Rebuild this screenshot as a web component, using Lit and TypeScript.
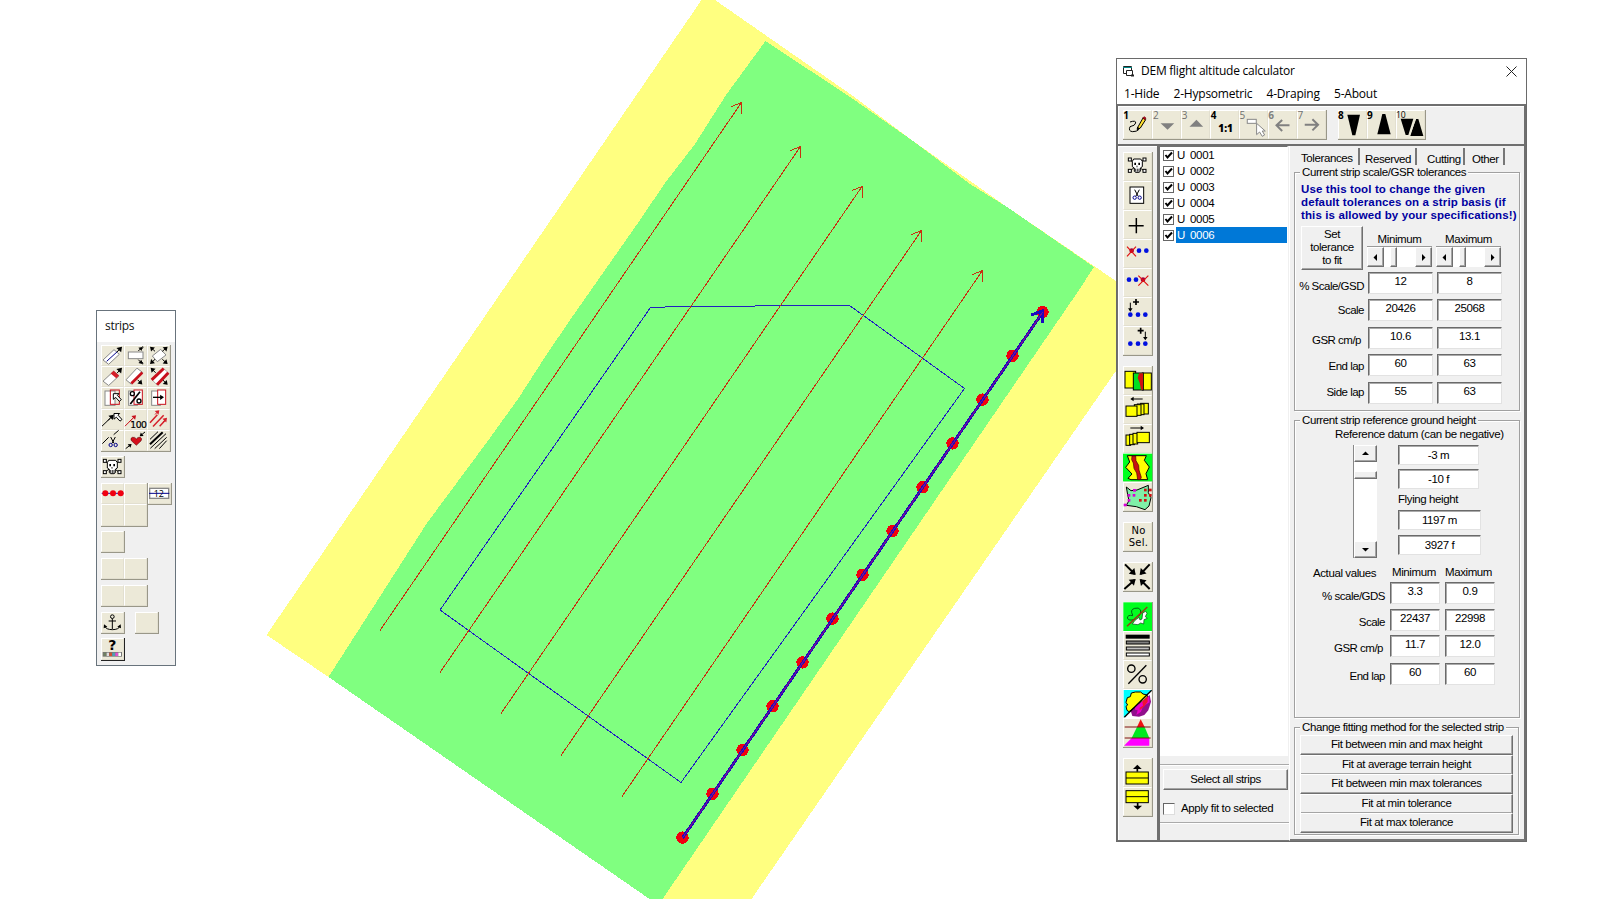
import { LitElement, html, svg, css, nothing } from "lit";
import { customElement } from "lit/decorators.js";

/* Icon artwork is drawn on a 3-units-per-pixel canvas. */
const icon = (x: number, y: number, w: number, h: number, art: unknown) =>
  html`<svg viewBox="${x} ${y} ${w} ${h}" width=${w / 3} height=${h / 3}>${art}</svg>`;

/* Shaft with a solid head at the end point. */
const arrow = (x1: number, y1: number, x2: number, y2: number, color = "#000", head = 12, w = 3) => {
  const a = Math.atan2(y2 - y1, x2 - x1);
  const p = (d: number) => `${x2 - head * Math.cos(a + d)},${y2 - head * Math.sin(a + d)}`;
  return svg`<line x1=${x1} y1=${y1} x2=${x2 - 4 * Math.cos(a)} y2=${y2 - 4 * Math.sin(a)} stroke=${color} stroke-width=${w} />
    <polygon points="${x2},${y2} ${p(0.6)} ${p(-0.6)}" fill=${color} />`;
};

const skull = (x: number, y: number) => svg`<g transform="translate(${x} ${y})" fill="#fff" stroke="#000" stroke-width="3">
  <path d="M8 8L48 40M48 8L8 40" />
  <rect x="2" y="2" width="9" height="9" /><rect x="46" y="2" width="9" height="9" />
  <rect x="2" y="36" width="9" height="9" /><rect x="46" y="36" width="9" height="9" />
  <path d="M18 5H39L44 12V28L38 32V42L34 45H24L20 42V32L14 28V12Z" />
  <path d="M20 16h5v7h-5zM32 16h5v7h-5z" fill="#000" stroke="none" />
  <path d="M28 25v5M24 34v9M29 34v9M34 34v9" stroke-width="2.5" />
</g>`;

const cursor = (x: number, y: number) =>
  svg`<path d="M${x} ${y}h17l-5 5l12 13l-6 5l-11 -12l-7 6z" fill="#fff" stroke="#000" stroke-width="3" />`;

const scissors = (x: number, y: number) => svg`<g transform="translate(${x} ${y})" fill="none" stroke-width="3">
  <path d="M5 0L15 19M19 0L9 19" stroke="#000" /><circle cx="5" cy="24" r="5" stroke="#00008b" /><circle cx="20" cy="24" r="5" stroke="#00008b" />
</g>`;

const stripIcons = [
  svg`<polygon points="40,166 73,135 89,149 57,179" fill="#fff" stroke="#888" stroke-width="3" /><path d="M51 170L84 140" stroke="#00008b" stroke-width="3" />${arrow(82, 142, 97, 126, "#000", 17)}`,
  svg`<rect x="116" y="142" width="44" height="20" fill="#fff" stroke="#888" stroke-width="3" />${arrow(146, 139, 158, 127)}${arrow(146, 165, 158, 178)}<path d="M153 136q10 -8 6 -11M153 168q10 8 6 11" stroke="#000" stroke-width="3" fill="none" />`,
  svg`<polygon points="188,154 213,134 229,151 203,171" fill="#fff" stroke="#888" stroke-width="3" />${arrow(218, 140, 234, 126, "#000", 15)}${arrow(196, 140, 181, 126, "#000", 15)}${arrow(196, 164, 181, 178, "#000", 15)}${arrow(218, 164, 234, 178, "#000", 15)}`,
  svg`<polygon points="40,230 72,200 88,214 57,243" fill="#fff" stroke="#888" stroke-width="3" /><polygon points="63,207 72,199 88,213 80,221" fill="#d5202a" />${arrow(82, 206, 97, 190, "#000", 17)}`,
  svg`<polygon points="109,226 142,191 159,204 125,239" fill="#fff" stroke="#888" stroke-width="3" /><path d="M125 237L158 204" stroke="#c8101c" stroke-width="8" />${arrow(144, 226, 158, 240, "#000", 15)}`,
  svg`<polygon points="187,226 222,192 236,205 201,240" fill="#fff" stroke="#888" stroke-width="2" /><path d="M186 226L222 192M202 241L236 205" stroke="#c8101c" stroke-width="9" />${arrow(198, 205, 183, 190, "#000", 15)}${arrow(220, 227, 234, 241, "#000", 15)}`,
  svg`<rect x="46" y="260" width="30" height="43" fill="#fff" stroke="#888" stroke-width="3" /><rect x="62" y="257" width="27" height="43" fill="none" stroke="#c8101c" stroke-width="3" />${cursor(71, 268)}`,
  svg`<rect x="117" y="260" width="26" height="43" fill="#fff" stroke="#888" stroke-width="3" /><rect x="133" y="257" width="25" height="43" fill="#fff" stroke="#c8101c" stroke-width="3" /><path d="M122 299L151 262" stroke="#000" stroke-width="5" /><circle cx="128" cy="268" r="6" fill="#fff" stroke="#000" stroke-width="4" /><circle cx="148" cy="290" r="6" fill="#fff" stroke="#000" stroke-width="4" />`,
  svg`<rect x="186" y="260" width="26" height="43" fill="#fff" stroke="#888" stroke-width="3" /><rect x="204" y="257" width="24" height="43" fill="#fff" stroke="#c8101c" stroke-width="3" />${arrow(190, 279, 223, 279, "#000", 14, 4)}`,
  svg`<path d="M37 363L62 339" stroke="#000" stroke-width="3" />${arrow(55, 346, 72, 329, "#000", 16)}${cursor(73, 325)}`,
  svg`<path d="M106 363L126 343" stroke="#c8101c" stroke-width="3" />${arrow(119, 350, 139, 330, "#c8101c", 14)}<text x="122" y="368" font-family="DejaVu Sans" font-size="28" textLength="50" stroke="#000" stroke-width=".6">100</text>`,
  svg`<path d="M181 353L203 329M190 364L222 330M210 363L226 346" stroke="#d5202a" stroke-width="4.5" />${arrow(196, 328, 209, 315, "#d5202a", 14)}${arrow(220, 351, 232, 338, "#d5202a", 14)}`,
  svg`<path d="M38 416L57 397M72 389L87 376" stroke="#000" stroke-width="3" />${scissors(58, 396)}`,
  svg`<path d="M140 421L125 407q-4 -7 3 -10q8 -2 12 5q4 -7 12 -5q7 4 2 11z" fill="#d5101c" stroke="#400" stroke-width="1.5" />${arrow(166, 381, 150, 394)}${arrow(108, 431, 126, 417)}`,
  svg`<path d="M181 403L205 380M209 431L231 407" stroke="#000" stroke-width="3" /><path d="M181 418L219 382" stroke="#000" stroke-width="6" /><path d="M182 430L229 386M195 431L231 397" stroke="#000" stroke-width="3" />`,
];

const sideTop = [
  skull(54, 53),
  svg`<rect x="61" y="142" width="41" height="49" fill="#fff" stroke="#000" stroke-width="3" />${scissors(70, 150)}`,
  svg`<path d="M57 258H102M80 235V281" stroke="#000" stroke-width="4.5" />`,
  svg`<circle cx="66" cy="333" r="7" fill="#a00040" /><circle cx="88" cy="333" r="7" fill="#0010e0" /><circle cx="110" cy="333" r="7" fill="#0010e0" /><path d="M52 321L79 350M79 321L52 350" stroke="#e01010" stroke-width="3.5" />`,
  svg`<circle cx="58" cy="420" r="7" fill="#0010e0" /><circle cx="79" cy="420" r="7" fill="#0010e0" /><circle cx="100" cy="420" r="7" fill="#a00040" /><path d="M86 408L116 438M116 408L86 438" stroke="#e01010" stroke-width="3.5" />`,
  svg`<circle cx="62" cy="525" r="7" fill="#0010e0" /><circle cx="85" cy="525" r="7" fill="#0010e0" /><circle cx="107" cy="525" r="7" fill="#0010e0" />${arrow(62, 489, 62, 516)}<path d="M70 487H88M79 478V496" stroke="#000" stroke-width="5" />`,
  svg`<circle cx="62" cy="612" r="7" fill="#0010e0" /><circle cx="85" cy="612" r="7" fill="#0010e0" /><circle cx="107" cy="612" r="7" fill="#0010e0" />${arrow(107, 576, 107, 602)}<path d="M84 573H102M93 564V582" stroke="#000" stroke-width="5" />`,
];

const sideMid = [
  svg`<rect x="46" y="50" width="32" height="50" fill="#ff0" stroke="#000" stroke-width="3" /><rect x="98" y="55" width="27" height="51" fill="#ff0" stroke="#000" stroke-width="3" /><rect x="71" y="55" width="30" height="51" fill="#00e020" stroke="#000" stroke-width="3" /><path d="M88 56l-4 14l6 14l4 21h6V56z" fill="#d01010" />`,
  svg`${arrow(99, 133, 62, 133)}<g fill="#ff0" stroke="#000" stroke-width="3"><rect x="93" y="146" width="23" height="32" /><rect x="83" y="148" width="20" height="32" /><rect x="74" y="150" width="20" height="32" /><rect x="49" y="154" width="33" height="31" /></g>`,
  svg`${arrow(62, 220, 103, 220)}<g fill="#ff0" stroke="#000" stroke-width="3"><rect x="49" y="241" width="14" height="31" /><rect x="60" y="239" width="14" height="31" /><rect x="70" y="236" width="14" height="32" /><rect x="82" y="233" width="37" height="31" /></g>`,
  svg`<rect x="40" y="297" width="88" height="83" fill="#00ff20" /><path d="M53 303H110L104 317L119 337L109 357L114 375H64L55 371L67 358L48 338L60 322Z" fill="#ff0" stroke="#000" stroke-width="3" /><path d="M67 304h11l1 14l8 14l1 14l7 22l-3 7h-8l-3 -20l-8 -14l-2 -16l-5 -10z" fill="#c81010" stroke="#400" stroke-width="2" />`,
  svg`<path d="M50 397l14 11l18 -2l34 -14v22l8 15l-6 25l-12 11l-26 -9l-30 -4l8 -14l-4 -18z" fill="#80f0a8" stroke="#000" stroke-width="3" /><g fill="#d800d8"><rect x="70" y="403" width="9" height="8" /><rect x="54" y="418" width="8" height="8" /><rect x="69" y="418" width="8" height="8" /><rect x="54" y="433" width="8" height="8" /><rect x="42" y="447" width="9" height="8" /></g><g fill="#d01010"><rect x="103" y="402" width="8" height="8" /><rect x="118" y="402" width="8" height="8" /><rect x="103" y="418" width="8" height="8" /><rect x="118" y="418" width="8" height="8" /><rect x="88" y="433" width="8" height="8" /><rect x="103" y="433" width="8" height="8" /></g>`,
];

const inward = svg`${arrow(46, 628, 78, 660, "#000", 21, 6)}${arrow(120, 628, 90, 660, "#000", 21, 6)}${arrow(44, 702, 78, 672, "#000", 21, 6)}${arrow(120, 702, 90, 672, "#000", 21, 6)}`;

const sideLow = [
  svg`<rect x="41" y="38" width="86" height="86" fill="#00ff20" /><path d="M69 76q-9 -16 6 -20q12 -4 18 5q2 12 -6 19M70 78q-16 -4 -17 7q4 10 22 4" fill="none" stroke="#004010" stroke-width="2.5" /><path d="M68 103l8 -11l12 -9l3 8l6 -3l2 -18l9 -5l4 6l-5 10l6 5l-10 4l-1 13l-9 -3l-8 5z" fill="#fff" stroke="#004010" stroke-width="2" /><path d="M52 110L113 52" stroke="#a03018" stroke-width="4" />`,
  svg`<rect x="48" y="135" width="72" height="12" fill="#000" /><g stroke="#000" stroke-width="3"><rect x="50" y="154" width="69" height="9" fill="#808080" /><rect x="50" y="172" width="69" height="9" fill="#c0c0c0" /><rect x="50" y="190" width="69" height="9" fill="#fff" /></g>`,
  svg`<circle cx="65" cy="237" r="11" fill="none" stroke="#000" stroke-width="4" /><circle cx="99" cy="269" r="11" fill="none" stroke="#000" stroke-width="4" /><path d="M56 282L110 227" stroke="#000" stroke-width="4" />`,
  svg`<rect x="42" y="301" width="84" height="84" fill="#fff" /><path d="M42 301H126L42 384z" fill="#0ff" /><path d="M58 366l-6 -4l-3 -12l5 -4l-5 -8l4 -14l9 -3l3 -11l12 -3h16l7 6l12 3l2 7z" fill="#ff0" stroke="#000" stroke-width="3" /><path d="M63 363L120 316l4 20l-8 26l-12 14l-16 5l-20 -2z" fill="#90108c" /><path d="M76 352L118 320l2 18l-20 12l-6 16l-14 10l4 -14l-8 -2z" fill="#e800c8" /><path d="M98 336L114 320v16l-10 14l-14 12v-8l10 -6z" fill="#f01030" /><path d="M44 383L126 302" stroke="#000" stroke-width="4" />`,
  svg`<path d="M93 389L105 412H82z" fill="#f01010" /><path d="M82 412h23l14 33H66z" fill="#00e820" /><path d="M66 445h53v23H43z" fill="#f0f" /><path d="M45 412H123M45 445H123" stroke="#801010" stroke-width="3" />`,
];
const fitUp = svg`<g fill="#ff0" stroke="#000" stroke-width="3"><rect x="49" y="548" width="67" height="36" /><path d="M49 566H116" /></g><path d="M83 547V532" stroke="#000" stroke-width="5" /><path d="M83 526l13 13H70z" />`;
const fitDown = svg`<g fill="#ff0" stroke="#000" stroke-width="3"><rect x="49" y="604" width="67" height="36" /><path d="M49 622H116" /></g><path d="M84 641V655" stroke="#000" stroke-width="5" /><path d="M84 661l13 -12H71z" />`;

const num = (x: number, s: string, c: string, w = 700) =>
  svg`<text x=${x} y="194" font-family="Open Sans" font-weight=${w} font-size="30" letter-spacing="-1" fill=${c}>${s}</text>`;
const tools = [
  svg`${num(40, "1", "#000")}<path d="M60 202q18 -6 17 3q-1 8 -17 11q-6 14 8 15q12 0 18 -6" fill="none" stroke="#000" stroke-width="3" /><path d="M82 220L99 190L107 195L91 220L82 226z" fill="#ffe030" stroke="#000" stroke-width="3" /><path d="M98 190l4 -4l6 4l-3 5z" fill="#c00020" stroke="#600" stroke-width="2" /><path d="M82 216l8 5l-9 6z" />`,
  svg`${num(129, "2", "#707070", 400)}<path d="M152 206h41l-20 19z" fill="#808080" />`,
  svg`${num(216, "3", "#707070", 400)}<path d="M239 216h41l-20 -21z" fill="#808080" />`,
  svg`${num(303, "4", "#000")}<text x="326" y="231" font-family="Open Sans" font-weight="800" font-size="30" textLength="43">1:1</text>`,
  svg`${num(390, "5", "#707070", 400)}<rect x="413" y="194" width="27" height="12" fill="#fff" stroke="#888" stroke-width="3" /><path d="M441 206v34l9 -8l8 13l7 -4l-7 -12h9z" fill="#fff" stroke="#888" stroke-width="3" />`,
  svg`${num(476, "6", "#808080")}<path d="M502 212H540M518 196L501 212L518 229" stroke="#808080" stroke-width="6" fill="none" />`,
  svg`${num(564, "7", "#707070", 400)}<path d="M586 210H625M609 194L626 210L609 227" stroke="#808080" stroke-width="6" fill="none" />`,
];
const tools2 = [
  svg`${num(683, "8", "#000")}<path d="M711 180h38l-14 62h-9z" />`,
  svg`${num(770, "9", "#000")}<path d="M801 239l15 -61h9l16 61z" />`,
  svg`<path d="M871 192h38l-15 49h-8zM900 244l16 -51h8l15 51z" /><path d="M896 246L918 188" stroke="#ece9d8" stroke-width="3" /><text x="857" y="190" font-family="Open Sans" font-size="26">10</text>`,
];

@customElement("strip-map")
export class StripMap extends LitElement {
  static styles = css`
    :host { display: block; height: 899px; }
    svg { display: block; }
  `;
  render() {
    const lines = [
      [380, 630.5, 741.5, 102.5], [440, 672.5, 800.5, 146.5], [501, 713.5, 862, 186.5],
      [561, 755.5, 921.5, 230.5], [622, 796.5, 982.5, 270.5],
    ];
    const dots = Array.from({ length: 13 }, (_, i) => [682.5 + i * 30, 837.6 - i * 43.8]);
    return html`<svg width="1601" height="899" shape-rendering="crispEdges" fill="none">
      <polygon fill="#ffff80" points="266.5,635 701.5,0 715,0 853,96 913,141 973,183 1007,207 1116,281 1150,305 1158,310 751.5,899 650,899 328.5,677" />
      <polygon fill="#80ff80" points="765.5,41 853,99 913,141 970,184 1007,207 1094,267 1079,290 662.5,899 649.5,899 328.5,677 427,523 487,442 518,399 545,357 570,320 640,220 665,183 695,144 726,95" />
      <polygon stroke="#2020c0" points="650.5,307.5 679.5,306.5 831.5,305.5 849.5,305.5 964.5,388.5 681,782.5 440,610" />
      ${lines.map(([a, b, c, d]) => svg`<path stroke="#c83010" d="M${a} ${b}L${c} ${d}M${c - 10} ${d + 4}L${c} ${d}V${d + 11}" />`)}
      ${dots.map(([x, y]) => svg`<circle cx=${x} cy=${y} r="6.2" fill="#f00010" />`)}
      <path stroke="#1c08c0" stroke-width="3" d="M682.5 838L1042.5 312.5M1031 315L1042.5 311V323" />
      <path stroke="#7c108c" d="M682.5 838L1042.5 312.5" />
    </svg>`;
  }
}

@customElement("tool-button")
export class ToolButton extends LitElement {
  static styles = css`
    :host { display: block; box-sizing: border-box; background: #ece9d8; border: 1px solid; border-color: #fff #e2dfd0 #e2dfd0 #fff; }
    ::slotted(svg) { display: block; margin: -1px; overflow: visible; }
  `;
  render() { return html`<slot></slot>`; }
}

@customElement("strips-window")
export class StripsWindow extends LitElement {
  static styles = css`
    :host { display: block; box-sizing: border-box; width: 80px; height: 356px; border: 1px solid #68737c; background: #f0f0f0; }
    .title { height: 31px; background: #fff; padding-left: 8px; font: 12px/30px "Open Sans", sans-serif; letter-spacing: -0.3px; box-sizing: border-box; color: #111; }
    .grid { display: grid; margin-left: 4px; grid-auto-rows: 21.2px; width: max-content; border-right: 1px solid #999788; border-bottom: 1px solid #999788; }
    .c3 { grid-template-columns: repeat(3, 23px); margin-top: 3px; }
    .c2 { grid-template-columns: repeat(2, 23px); }
    .c1 { grid-template-columns: 23px; }
    .g1 { margin-top: 4.6px; }
    .c3 + .g1 { margin-top: 4px; }
    .row { display: flex; align-items: flex-start; margin-top: 5px; }
    .row .c1 + .c1 { margin-left: 10px; }
    .row .c2 + .c1 { margin-left: 0; }
    .help { border-color: #222; margin-top: 4.4px; }
    svg { overflow: visible; }
  `;
  render() {
    const b = (art?: unknown) => html`<tool-button>${art ?? nothing}</tool-button>`;
    return html`
      <div class="title">strips</div>
      <div class="grid c3">${stripIcons.map((a, i) => b(icon(34 + (i % 3) * 69, 121 + Math.floor(i / 3) * 63.5, 69, 63.5, a)))}</div>
      <div class="grid c1 g1">${b(icon(34, 453, 69, 64, skull(39, 461)))}</div>
      <div class="row">
        <div class="grid c2">
          ${b(icon(34, 9, 69, 64, svg`<path d="M36 40H101" stroke="#1c08c0" stroke-width="3" /><circle cx="47" cy="40" r="9" fill="#f00010" /><circle cx="70" cy="40" r="9" fill="#f00010" /><circle cx="93" cy="40" r="9" fill="#f00010" />`))}
          ${b()}${b()}${b()}
        </div>
        <div class="grid c1">${b(icon(173, 9, 69, 64, svg`<rect x="178" y="25" width="57" height="30" fill="#fff" stroke="#888" stroke-width="4" /><text x="190" y="50" font-family="Open Sans" font-size="27" textLength="31">12</text><path d="M176 40H237" stroke="#00008b" stroke-width="3" />`))}</div>
      </div>
      <div class="grid c1 g1">${b()}</div>
      <div class="grid c2 g1">${b()}${b()}</div>
      <div class="grid c2 g1">${b()}${b()}</div>
      <div class="row">
        <div class="grid c1">${b(icon(34, 397, 69, 64, svg`<g fill="none" stroke="#000" stroke-width="3"><circle cx="68" cy="411" r="5.5" /><path d="M68 417V448M57 424H79M45 439q4 11 23 11q19 0 23 -11" /><path d="M42 446l1 -12l10 7zM94 446l-1 -12l-10 7z" fill="#000" stroke="none" /></g>`))}</div>
        <div class="grid c1">${b()}</div>
      </div>
      <div class="grid c1 g1 help">${b(icon(34, 478, 69, 64, svg`<text x="56" y="514" font-family="DejaVu Sans" font-weight="700" font-size="42">?</text><rect x="39" y="520" width="58" height="14" fill="#777" /><rect x="42" y="522" width="8" height="10" fill="#708060" /><rect x="51" y="522" width="7" height="10" fill="#ddd" /><rect x="59" y="522" width="8" height="10" fill="#d05030" /><rect x="68" y="522" width="8" height="10" fill="#50a0b0" /><rect x="77" y="522" width="8" height="10" fill="#e050d0" /><rect x="86" y="522" width="8" height="10" fill="#fff" />`))}</div>
    `;
  }
}

interface FieldRow { label: string; pad: number; min: string; max: string; gap: number; end?: number; }

@customElement("dem-window")
export class DemWindow extends LitElement {
  static styles = css`
    :host { display: flex; flex-direction: column; box-sizing: border-box; width: 411px; height: 784px; border: 1px solid #6a6a6a; background: #f0f0f0; font: 11.5px/13px "Liberation Sans", Arial, sans-serif; letter-spacing: -0.4px; color: #000; }
    svg { display: block; overflow: visible; }
    .title { display: flex; height: 24px; background: #fff; align-items: center; padding-left: 5px; font: 12px/24px "Open Sans", sans-serif; letter-spacing: -0.25px; }
    .title .name { flex: 1; padding-left: 6px; }
    .title .close { margin-right: 9.5px; }
    .menu { display: flex; background: #fff; height: 21px; padding-left: 7px; gap: 14.3px; font: 12px/22px "Open Sans", sans-serif; letter-spacing: -0.23px; }
    .bar { height: 42px; box-sizing: border-box; border: 2px solid #6f6f6f; border-left-width: 1px; box-shadow: inset 1px 1px #fff; display: flex; padding: 4px 0 0 5px; gap: 10.5px; }
    .set { display: grid; width: max-content; height: max-content; border-right: 1px solid #999788; border-bottom: 1px solid #999788; grid-auto-rows: 29px; }
    .bar .set { grid-auto-flow: column; grid-auto-columns: 29px; }
    .main { flex: 1; display: grid; grid-template-columns: 43px 130px 1fr; min-height: 0; }
    .side { border-left: 1px solid #6f6f6f; border-right: 3px solid #6f6f6f; border-bottom: 1px solid #6f6f6f; box-shadow: inset 1px 1px #fff; padding: 6px 0 0 5px; }
    .side .set { grid-template-columns: 29px; }
    .s2 { margin-top: 10px; } .s3 { margin-top: 10px; }
    .sel { font: 10px/12px "DejaVu Sans", sans-serif; text-align: center; padding: 2px 0 0 2px; letter-spacing: 0.3px; }
    .left { display: flex; flex-direction: column; border-right: 1px solid #fff; border-bottom: 1px solid #777; }
    .list { height: 610px; background: #fff; border-top: 1px solid #6f6f6f; border-right: 1px solid #fff; box-sizing: border-box; margin-right: 1px; padding-left: 1px; }
    .item { display: flex; height: 16px; align-items: center; padding-left: 2px; }
    .box { width: 11px; height: 11px; box-sizing: border-box; border: 1px solid #666; background: #fff; flex: none; }
    .item span { flex: 1; margin-left: 2px; padding-left: 1px; font: 11.5px/16px "Liberation Sans", Arial, sans-serif; letter-spacing: -0.3px; display: flex; gap: 5px; }
    .item.on span { background: #0078d7; color: #fff; }
    .fitbox { margin-top: 8px; border-top: 1px solid #aaa; border-bottom: 1px solid #aaa; height: 59px; box-sizing: border-box; box-shadow: inset 0 1px #fff, 0 1px #fff; padding: 4px 1px 0 3px; }
    .btn { box-sizing: border-box; border: 1px solid; border-color: #fff #6f6f6f #6f6f6f #fff; box-shadow: inset -1px -1px #a5a5a5; text-align: center; background: #f0f0f0; }
    .all { height: 21px; line-height: 19px; }
    .apply { display: flex; align-items: center; margin-top: 12px; height: 13px; gap: 6px; letter-spacing: -0.35px; }
    .apply .tick { width: 12px; height: 12px; box-sizing: border-box; background: #fff; border: 1px solid; border-color: #666 #ddd #ddd #666; }
    .right { padding: 2px 4px 0 4px; border-right: 2px solid #6f6f6f; border-bottom: 2px solid #777; min-width: 0; }
    .tabs { display: flex; height: 17px; margin-bottom: 7px; }
    .tab { border-right: 2px solid #777; box-sizing: border-box; line-height: 20px; padding-top: 1px; }
    .tab:first-child { width: 66px; padding: 0 0 0 7px; }
    .tab:nth-child(2) { width: 57px; padding-left: 5px; }
    .tab:nth-child(3) { width: 48px; padding-left: 10px; }
    .tab:nth-child(4) { width: 40px; padding-left: 7px; }
    .group { border: 1px solid #a0a0a0; box-shadow: inset 1px 1px #fff, 1px 1px #fff; box-sizing: border-box; width: 226px; }
    .legend { width: max-content; background: #f0f0f0; margin: -7px 0 0 5px; padding: 0 2px; height: 13px; }
    .g1 { height: 239px; } .g2 { height: 298px; margin-top: 9px; } .g3 { height: 108px; margin-top: 9px; width: 225px; }
    .hint { font-weight: 700; color: #0000a0; margin: 4px 0 0 6px; white-space: nowrap; letter-spacing: 0.12px; height: 39px; }
    .top { display: grid; grid-template-columns: 62px 65px 65px; column-gap: 4px; margin: 4px 0 0 6px; height: 46px; }
    .set-btn { height: 44px; padding-top: 1px; }
    .mm { text-align: center; padding-top: 7px; }
    .hscroll { display: flex; height: 20px; margin-top: 1px; background: #fff; box-shadow: 0 -1px #999; }
    .hscroll .btn, .vscroll .btn { display: grid; place-items: center; }
    .hscroll .btn { width: 17px; height: 20px; }
    .hscroll .thumb { width: 7px; margin-left: 6px; }
    .fill { flex: 1; }
    .rows { display: grid; }
    .r1 { grid-template-columns: 66px 65px 65px; column-gap: 4px; margin-left: 3px; }
    .r2 { grid-template-columns: 86px 50px 50px; column-gap: 5px; margin-left: 4px; margin-top: 2px; }
    .label { text-align: right; white-space: nowrap; letter-spacing: -0.5px; }
    .field { height: 22px; box-sizing: border-box; border: 1px solid; border-color: #6a6a6a #e2e2e2 #e2e2e2 #6a6a6a; box-shadow: inset 1px 1px #aaa; background: #fff; text-align: center; line-height: 17px; }
    .datum { margin: 1px 0 0 40px; letter-spacing: -0.35px; }
    .ref { display: flex; margin: 4px 0 0 59px; gap: 21px; height: 113px; }
    .vscroll { display: flex; flex-direction: column; width: 23px; height: 113px; background: #fff; box-shadow: -1px 0 #888; }
    .vscroll .btn { height: 17px; } .vscroll .thumb { height: 8px; margin-top: 9px; }
    .ref .col { width: 82px; }
    .ref .field { height: 20px; line-height: 18px; margin-bottom: 4px; width: 81px; }
    .ref .fh { height: 13px; margin: 0 0 4px; }
    .ref .fh ~ .field { width: 83px; margin-bottom: 5px; }
    .head { display: grid; grid-template-columns: 79px 53px 50px; margin: 8px 0 0 18px; }
    .head .l { line-height: 14px; }
    .g3 .btn { height: 20px; line-height: 17px; margin: 0 5px 0 5px; }
    .g3 .legend + .btn { margin-top: 1px; }
    .g3 .btn + .btn { margin-top: -0.4px; }
  `;
  private rows1: FieldRow[] = [
    { label: "% Scale/GSD", pad: 8, min: "12", max: "8", gap: 4.3 },
    { label: "Scale", pad: 4.5, min: "20426", max: "25068", gap: 4.5 },
    { label: "GSR cm/p", pad: 7, min: "10.6", max: "13.1", gap: 4.5, end: 3 },
    { label: "End lap", pad: 5.5, min: "60", max: "63", gap: 4.5 },
    { label: "Side lap", pad: 4.5, min: "55", max: "63", gap: 0 },
  ];
  private rows2: FieldRow[] = [
    { label: "% scale/GDS", pad: 7.5, min: "3.3", max: "0.9", gap: 3.7 },
    { label: "Scale", pad: 7, min: "22437", max: "22998", gap: 3.4 },
    { label: "GSR cm/p", pad: 7, min: "11.7", max: "12.0", gap: 4.6, end: 2 },
    { label: "End lap", pad: 7, min: "60", max: "60", gap: 0 },
  ];
  private fields(rows: FieldRow[]) {
    return rows.map((r) => html`
      <div class="label" style="padding-top:${r.pad}px;padding-right:${r.end ?? 0}px;height:${23 + r.gap - r.pad}px">${r.label}</div>
      <div class="field">${r.min}</div><div class="field">${r.max}</div>`);
  }
  private tri(d: string) { return html`<svg width="9" height="9"><path d=${d} /></svg>`; }
  render() {
    const b = (art: unknown) => html`<tool-button>${art}</tool-button>`;
    const hs = html`<div class="hscroll"><div class="btn">${this.tri("M6 1V8L2.5 4.5Z")}</div><div class="btn thumb"></div><div class="fill"></div><div class="btn">${this.tri("M3 1V8L6.5 4.5Z")}</div></div>`;
    return html`
      <div class="title">
        <svg width="13" height="12" fill="#fff" stroke="#222"><path d="M1.5 1.5h8v7h-8z" /><path d="M1 2.5H10" stroke="#088" /><path d="M4.5 5.5h6v5h-6z" /><path d="M9 10.5h3" stroke-width="2" /></svg>
        <span class="name">DEM flight altitude calculator</span>
        <svg class="close" width="11" height="11" stroke="#222" fill="none"><path d="M.5 .5L10.5 10.5M10.5 .5L.5 10.5" /></svg>
      </div>
      <div class="menu"><span>1-Hide</span><span>2-Hypsometric</span><span>4-Draping</span><span>5-About</span></div>
      <div class="bar">
        <div class="set">${tools.map((t, i) => b(icon(39 + i * 87.3, 166, 87, 87, t)))}</div>
        <div class="set">${tools2.map((t, i) => b(icon(683 + i * 87, 166, 87, 87, t)))}</div>
      </div>
      <div class="main">
        <div class="side">
          <div class="set">${sideTop.map((t, i) => b(icon(40, 37 + i * 87, 87, 87, t)))}</div>
          <div class="set s2">${sideMid.map((t, i) => b(icon(40, 34 + i * 87, 87, 87, t)))}</div>
          <div class="set s2"><tool-button><div class="sel">No<br />Sel.</div></tool-button></div>
          <div class="set s2">${b(icon(40, 621, 87, 87, inward))}</div>
          <div class="set s3">${sideLow.map((t, i) => b(icon(40, 37 + i * 87, 87, 87, t)))}</div>
          <div class="set s2">${b(icon(40, 506, 87, 87, fitUp))}${b(icon(40, 593, 87, 87, fitDown))}</div>
        </div>
        <div class="left">
          <div class="list">
            ${[1, 2, 3, 4, 5, 6].map((n) => html`<div class="item ${n === 6 ? "on" : ""}"><div class="box"><svg width="9" height="9" fill="none" stroke="#000" stroke-width="2"><path d="M1.5 4L3.5 6.5L8 1.5" /></svg></div><span><b style="font-weight:400">U</b><i style="font-style:normal">000${n}</i></span></div>`)}
          </div>
          <div class="fitbox">
            <div class="btn all">Select all strips</div>
            <div class="apply"><div class="tick"></div>Apply fit to selected</div>
          </div>
        </div>
        <div class="right">
          <div class="tabs"><div class="tab">Tolerances</div><div class="tab">Reserved</div><div class="tab">Cutting</div><div class="tab">Other</div></div>
          <div class="group g1">
            <div class="legend">Current strip scale/GSR tolerances</div>
            <div class="hint">Use this tool to change the given<br />default tolerances on a strip basis (if<br />this is allowed by your specifications!)</div>
            <div class="top">
              <div class="btn set-btn">Set<br />tolerance<br />to fit</div>
              <div><div class="mm">Minimum</div>${hs}</div>
              <div><div class="mm">Maximum</div>${hs}</div>
            </div>
            <div class="rows r1">${this.fields(this.rows1)}</div>
          </div>
          <div class="group g2">
            <div class="legend">Current strip reference ground height</div>
            <div class="datum">Reference datum (can be negative)</div>
            <div class="ref">
              <div class="vscroll"><div class="btn">${this.tri("M1 6H8L4.5 2.5Z")}</div><div class="btn thumb"></div><div class="fill"></div><div class="btn">${this.tri("M1 3H8L4.5 6.5Z")}</div></div>
              <div class="col"><div class="field">-3 m</div><div class="field">-10 f</div><div class="fh">Flying height</div><div class="field">1197 m</div><div class="field">3927 f</div></div>
            </div>
            <div class="head"><span class="l">Actual values</span><span>Minimum</span><span>Maximum</span></div>
            <div class="rows r2">${this.fields(this.rows2)}</div>
          </div>
          <div class="group g3">
            <div class="legend">Change fitting method for the selected strip</div>
            ${["Fit between min and max height", "Fit at average terrain height", "Fit between min max tolerances", "Fit at min tolerance", "Fit at max tolerance"].map((t) => html`<div class="btn">${t}</div>`)}
          </div>
        </div>
      </div>`;
  }
}

@customElement("app-root")
export class AppRoot extends LitElement {
  static styles = css`
    :host { display: block; position: relative; width: 1601px; height: 899px; overflow: hidden; background: #fff; }
    .strips { position: absolute; left: 96px; top: 310px; }
    .dem { position: absolute; left: 1116px; top: 58px; }
  `;
  render() {
    return html`<strip-map></strip-map><strips-window class="strips"></strips-window><dem-window class="dem"></dem-window>`;
  }
}
